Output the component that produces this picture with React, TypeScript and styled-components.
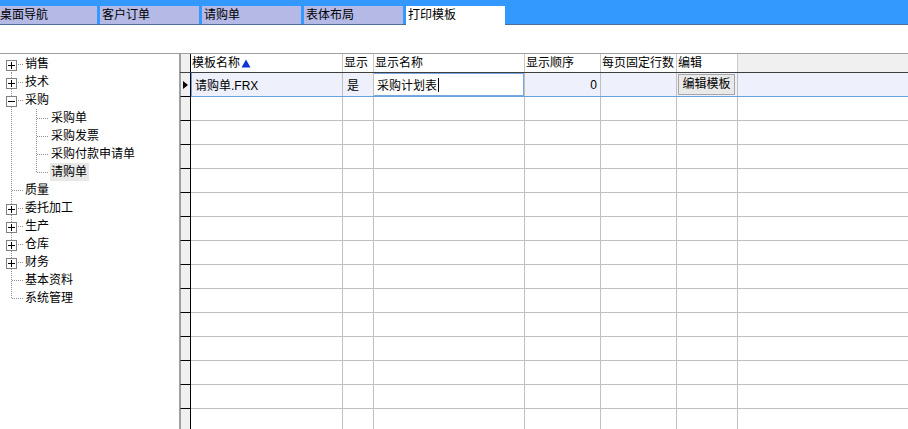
import React from "react";
import styled, { createGlobalStyle, css } from "styled-components";

const Global = createGlobalStyle`
  html, body { margin: 0; padding: 0; background: #fff; overflow: hidden; }
  body {
    font-family: "Liberation Sans", "Noto Sans CJK SC", sans-serif;
    font-size: 12px;
    color: #000;
  }
  * { box-sizing: border-box; }
`;

const Page = styled.div`
  width: 908px;
  height: 429px;
  display: flex;
  flex-direction: column;
  overflow: hidden;
`;

const TabBar = styled.div`
  height: 25px;
  background: #3399ff;
  border-bottom: 1px solid #4a6f98;
  display: flex;
  align-items: flex-end;
  gap: 3px;
  padding-left: 0;
  margin-left: -2px;
  flex: none;
`;

const Tab = styled.div<{ $active?: boolean }>`
  width: 99px;
  height: 18px;
  line-height: 18px;
  padding-left: 2px;
  background: #b4b9e6;
  white-space: nowrap;
  ${(p) =>
    p.$active &&
    css`
      background: #fff;
      height: 19px;
      margin-bottom: -1px;
      line-height: 18px;
      position: relative;
    `}
`;

const Spacer = styled.div`
  height: 28px;
  flex: none;
`;

const Main = styled.div`
  flex: 1;
  display: flex;
  border-top: 1px solid #a0a0a0;
  min-height: 0;
`;

const TreePanel = styled.div`
  width: 180px;
  flex: none;
  border-right: 1px solid #a0a0a0;
  padding-top: 1px;
`;

const TreeRow = styled.div`
  height: 18px;
  display: flex;
  align-items: stretch;
`;

type ConnKind = "first" | "middle" | "last" | "pass";

const Conn = styled.div<{ $kind: ConnKind }>`
  width: 25px;
  flex: none;
  position: relative;
  &::before {
    content: "";
    position: absolute;
    left: 11px;
    width: 1px;
    background-image: linear-gradient(to bottom, #909090 50%, transparent 50%);
    background-size: 1px 2px;
    ${(p) =>
      p.$kind === "first"
        ? css`top: 9px; bottom: 0;`
        : p.$kind === "last"
        ? css`top: 0; height: 9px;`
        : css`top: 0; bottom: 0;`}
  }
  ${(p) =>
    p.$kind !== "pass" &&
    css`
      &::after {
        content: "";
        position: absolute;
        left: 12px;
        width: 12px;
        top: 9px;
        height: 1px;
        background-image: linear-gradient(to right, #909090 50%, transparent 50%);
        background-size: 2px 1px;
      }
    `}
`;

const ExpandBox = styled.span`
  position: absolute;
  left: 6px;
  top: 5px;
  width: 11px;
  height: 11px;
  border: 1px solid #808080;
  background: #fff;
  z-index: 1;
  display: block;
`;

const TreeLabel = styled.span<{ $selected?: boolean; $child?: boolean }>`
  line-height: 18px;
  padding: 0 1px 0 ${(p) => (p.$child ? 1 : 0)}px;
  white-space: nowrap;
  ${(p) =>
    p.$selected &&
    css`
      background: #e8e8e8;
      padding: 0 2px 0 1px;
    `}
`;

const Box: React.FC<{ open?: boolean }> = ({ open }) => (
  <ExpandBox>
    <svg width="9" height="9" viewBox="0 0 9 9" style={{ display: "block" }}>
      <rect x="1" y="4" width="7" height="1" fill="#000" />
      {!open && <rect x="4" y="1" width="1" height="7" fill="#000" />}
    </svg>
  </ExpandBox>
);

type Node = { label: string; kind: ConnKind; box?: "plus" | "minus"; children?: { label: string; kind: ConnKind; selected?: boolean }[] };

const tree: Node[] = [
  { label: "销售", kind: "first", box: "plus" },
  { label: "技术", kind: "middle", box: "plus" },
  {
    label: "采购",
    kind: "middle",
    box: "minus",
    children: [
      { label: "采购单", kind: "middle" },
      { label: "采购发票", kind: "middle" },
      { label: "采购付款申请单", kind: "middle" },
      { label: "请购单", kind: "last", selected: true },
    ],
  },
  { label: "质量", kind: "middle" },
  { label: "委托加工", kind: "middle", box: "plus" },
  { label: "生产", kind: "middle", box: "plus" },
  { label: "仓库", kind: "middle", box: "plus" },
  { label: "财务", kind: "middle", box: "plus" },
  { label: "基本资料", kind: "middle" },
  { label: "系统管理", kind: "last" },
];

/* ---------- grid ---------- */

const GridPanel = styled.div`
  flex: 1;
  display: flex;
  flex-direction: column;
  min-width: 0;
  overflow: hidden;
`;

const cols = "11px 152px 31px 151px 76px 76px 61px 1fr";

const HeaderRow = styled.div`
  display: grid;
  grid-template-columns: ${cols};
  height: 19px;
  border-bottom: 1px solid #404040;
  flex: none;
  background: #f0f0f0;
`;

const HeadCell = styled.div<{ $blank?: boolean }>`
  background: ${(p) => (p.$blank ? "#f0f0f0" : "#fff")};
  border-right: 1px solid ${(p) => (p.$blank ? "transparent" : "#c8c8c8")};
  line-height: 18px;
  padding-left: 1px;
  white-space: nowrap;
  display: flex;
  align-items: center;
  gap: 1px;
`;

const Indicator = styled.div<{ $head?: boolean }>`
  background: #f0f0f0;
  border-left: 1px solid #a0a0a0;
  border-right: 1px solid #000;
  border-bottom: ${(p) => (p.$head ? "none" : "1px solid #000")};
  display: flex;
  align-items: center;
  justify-content: center;
`;

const DataRow = styled.div<{ $selected?: boolean }>`
  display: grid;
  grid-template-columns: ${cols};
  height: 24px;
  flex: none;
  border-bottom: 1px solid ${(p) => (p.$selected ? "#6a9fe0" : "#c0c0c0")};
  background: ${(p) => (p.$selected ? "#eef0fc" : "#fff")};
  & > ${Indicator} {
    margin-bottom: -1px;
  }
`;

const Cell = styled.div<{ $align?: "left" | "right"; $last?: boolean; $first?: boolean; $pad?: number }>`
  border-right: ${(p) => (p.$last ? "none" : "1px solid #c0c0c0")};
  display: flex;
  align-items: center;
  justify-content: ${(p) => (p.$align === "right" ? "flex-end" : "flex-start")};
  padding: 0 ${(p) => (p.$align === "right" ? 3 : 0)}px 0 ${(p) => p.$pad ?? 3}px;
  white-space: nowrap;
  overflow: hidden;
  ${(p) =>
    p.$first &&
    css`
      box-shadow: inset 1px 0 0 #6a9fe0;
    `}
`;

const Editor = styled.div`
  flex: 1;
  align-self: stretch;
  background: #fff;
  border: 1px solid #7ba7e1;
  margin: 0 0 0 -1px;
  display: flex;
  align-items: center;
  padding-left: 3px;
`;

const Caret = styled.span`
  display: inline-block;
  width: 1px;
  height: 14px;
  background: #000;
  margin-left: 1px;
`;

const EditButton = styled.button`
  font: inherit;
  font-size: 12px;
  width: 57px;
  height: 21px;
  margin-left: -1px;
  padding: 0;
  background: #e9e9e9;
  border: 1px solid #a6a6a6;
  border-radius: 0;
  color: #000;
  line-height: 19px;
`;

const headers = ["模板名称", "显示", "显示名称", "显示顺序", "每页固定行数", "编辑"];

export default function App() {
  const emptyRows = Array.from({ length: 15 }, (_, i) => i);
  return (
    <Page>
      <Global />
      <TabBar>
        <Tab>桌面导航</Tab>
        <Tab>客户订单</Tab>
        <Tab>请购单</Tab>
        <Tab>表体布局</Tab>
        <Tab $active>打印模板</Tab>
      </TabBar>
      <Spacer />
      <Main>
        <TreePanel>
          {tree.map((n) => (
            <React.Fragment key={n.label}>
              <TreeRow>
                <Conn $kind={n.kind}>{n.box && <Box open={n.box === "minus"} />}</Conn>
                <TreeLabel>{n.label}</TreeLabel>
              </TreeRow>
              {n.children?.map((c) => (
                <TreeRow key={c.label}>
                  <Conn $kind="pass" />
                  <Conn $kind={c.kind} />
                  <TreeLabel $child $selected={c.selected}>{c.label}</TreeLabel>
                </TreeRow>
              ))}
            </React.Fragment>
          ))}
        </TreePanel>
        <GridPanel>
          <HeaderRow>
            <Indicator $head />
            {headers.map((h, i) => (
              <HeadCell key={h}>
                {h}
                {i === 0 && (
                  <svg width="10" height="9" viewBox="0 0 10 9">
                    <polygon points="5,0.5 9.5,8.5 0.5,8.5" fill="#1433d6" />
                  </svg>
                )}
              </HeadCell>
            ))}
            <HeadCell $blank />
          </HeaderRow>
          <DataRow $selected>
            <Indicator>
              <svg width="5" height="8" viewBox="0 0 5 8">
                <polygon points="0,0 5,4 0,8" fill="#000" />
              </svg>
            </Indicator>
            <Cell $first $pad={4}>请购单.FRX</Cell>
            <Cell $pad={4}>是</Cell>
            <Cell $pad={0}>
              <Editor>
                采购计划表
                <Caret />
              </Editor>
            </Cell>
            <Cell $align="right">0</Cell>
            <Cell />
            <Cell $pad={2}>
              <EditButton>编辑模板</EditButton>
            </Cell>
            <Cell $last />
          </DataRow>
          {emptyRows.map((r) => (
            <DataRow key={r}>
              <Indicator />
              <Cell />
              <Cell />
              <Cell />
              <Cell />
              <Cell />
              <Cell />
              <Cell $last />
            </DataRow>
          ))}
        </GridPanel>
      </Main>
    </Page>
  );
}
